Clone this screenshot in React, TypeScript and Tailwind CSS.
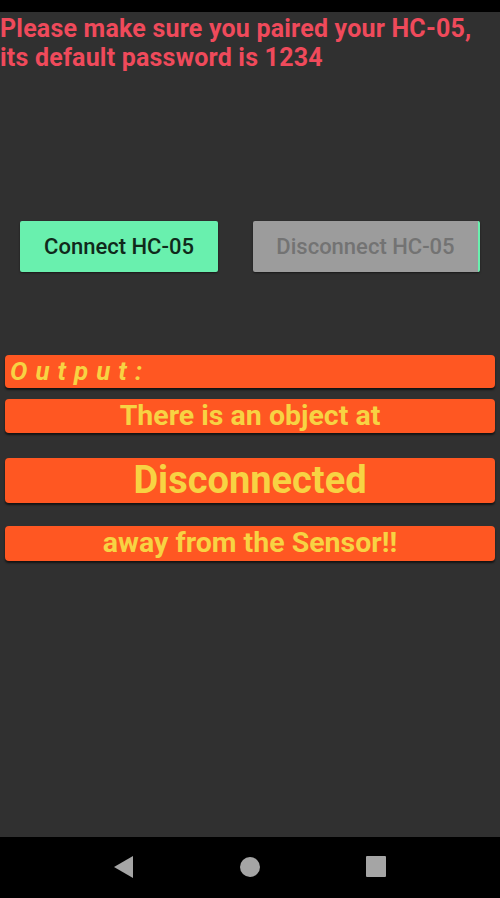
export default function App() {
  return (
    <div className="w-[500px] h-[898px] flex flex-col bg-black font-['Roboto',sans-serif]">
      {/* status bar */}
      <div className="h-[12px] bg-black" />

      <main className="flex-1 bg-[#303030] flex flex-col">
        <p className="pt-[2px] text-[25px] leading-[29px] font-bold text-[#ef4a5b] tracking-[0.2px]">
          Please make sure you paired your HC-05,
          <br />
          its default password is 1234
        </p>

        <div className="mt-[149px] flex justify-between pl-[20px] pr-[20px]">
          <button className="w-[198px] h-[51px] rounded-[2px] bg-[#69f0ae] text-[22px] font-medium text-[#10291b] shadow-[0_1px_2px_rgba(0,0,0,0.5)]">
            Connect HC-05
          </button>
          <button
            disabled
            className="w-[227px] h-[51px] rounded-[2px] bg-[#9c9c9c] text-[22px] font-medium text-[#737373] border-r-2 border-[#69f0ae] shadow-[0_1px_2px_rgba(0,0,0,0.5)]"
          >
            Disconnect HC-05
          </button>
        </div>

        <div className="mt-[83px] px-[5px] flex flex-col">
          <div className="h-[33px] rounded-[4px] bg-[#ff5722] shadow-[0_2px_2px_rgba(0,0,0,0.6)] flex items-center pl-[5px]">
            <span className="text-[26px] italic font-bold tracking-[8px] text-[#f7d343]">Output:</span>
          </div>
          <div className="mt-[11px] h-[34px] rounded-[4px] bg-[#ff5722] shadow-[0_2px_2px_rgba(0,0,0,0.6)] flex items-center justify-center">
            <span className="text-[28.5px] font-bold text-[#f7d343]">There is an object at</span>
          </div>
          <div className="mt-[25px] h-[45px] rounded-[4px] bg-[#ff5722] shadow-[0_2px_2px_rgba(0,0,0,0.6)] flex items-center justify-center">
            <span className="text-[38px] font-bold text-[#f7d343]">Disconnected</span>
          </div>
          <div className="mt-[23px] h-[35px] rounded-[4px] bg-[#ff5722] shadow-[0_2px_2px_rgba(0,0,0,0.6)] flex items-center justify-center">
            <span className="text-[28.5px] font-bold text-[#f7d343]">away from the Sensor!!</span>
          </div>
        </div>
      </main>

      {/* nav bar */}
      <div className="h-[61px] bg-black flex items-center justify-center gap-[106px] pb-[2px]">
        <svg width="20" height="22" viewBox="0 0 20 22">
          <polygon points="19,0 19,22 0,11" fill="#a5a5a5" />
        </svg>
        <span className="w-[20px] h-[20px] rounded-full bg-[#a5a5a5]" />
        <span className="w-[20px] h-[21px] rounded-[1px] bg-[#a5a5a5]" />
      </div>
    </div>
  );
}
